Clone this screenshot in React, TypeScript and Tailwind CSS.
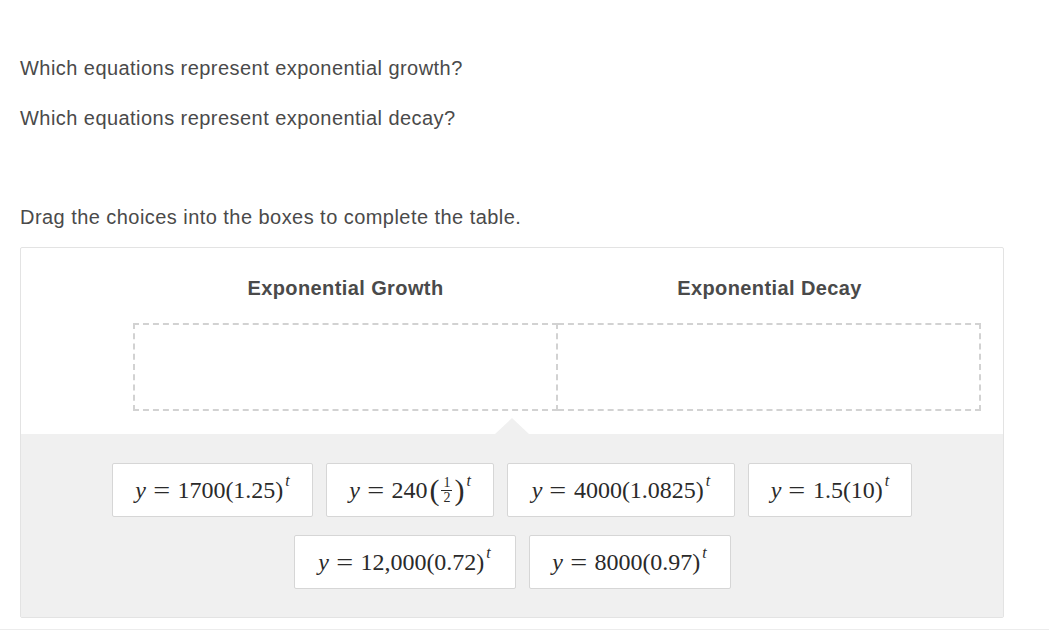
import React from "react";

const mathFont = { fontFamily: '"Liberation Serif", "DejaVu Serif", serif' };

function Eq({ base, frac }: { base: string; frac?: boolean }) {
  return (
    <span className="inline-flex items-baseline whitespace-nowrap text-[24px] text-[#2a2a2a]" style={mathFont}>
      <i className="mr-[9px]">y</i>
      <span className="mr-[9px] scale-x-125 inline-block">=</span>
      {frac ? (
        <span className="inline-flex items-center">
          <span>240</span>
          <span className="text-[30px] leading-none ml-[2px]">(</span>
          <span className="inline-flex flex-col items-center text-[14px] leading-[14px] mx-[2px]">
            <span className="px-[1px]">1</span>
            <span className="border-t border-[#2a2a2a] px-[2px]">2</span>
          </span>
          <span className="text-[30px] leading-none">)</span>
        </span>
      ) : (
        <span>{base}</span>
      )}
      <sup className="text-[16px] italic ml-[2px] -top-[12px]">t</sup>
    </span>
  );
}

const tiles = [
  { w: "w-[201px]", base: "1700(1.25)" },
  { w: "w-[168px]", base: "", frac: true },
  { w: "w-[228px]", base: "4000(1.0825)" },
  { w: "w-[164px]", base: "1.5(10)" },
  { w: "w-[222px]", base: "12,000(0.72)" },
  { w: "w-[202px]", base: "8000(0.97)" },
];

function Tile({ w, base, frac }: { w: string; base: string; frac?: boolean }) {
  return (
    <div className={`${w} h-[54px] flex items-center justify-center bg-white border border-[#d6d6d6] rounded-[2px]`}>
      <Eq base={base} frac={frac} />
    </div>
  );
}

export default function App() {
  return (
    <div
      className="w-[1049px] h-[630px] bg-white text-[#4a4a4a] overflow-hidden border-b border-[#ececec]"
      style={{ fontFamily: '"Liberation Sans", Arial, sans-serif' }}
    >
      <div className="px-[20px] pt-[55px]">
        <p className="text-[20px] tracking-[0.45px] leading-[26px]">Which equations represent exponential growth?</p>
        <p className="text-[20px] tracking-[0.45px] leading-[26px] mt-[24px]">Which equations represent exponential decay?</p>
        <p className="text-[20px] tracking-[0.45px] leading-[26px] mt-[73px]">Drag the choices into the boxes to complete the table.</p>

        <div className="mt-[17px] w-[984px] border border-[#e3e3e3] rounded-[2px]">
          {/* table area */}
          <div className="grid grid-cols-[112px_425px_423px] pt-[27px] h-[186px]">
            <div />
            <div className="text-center font-bold text-[20px] tracking-[0.4px] leading-[26px]">Exponential Growth</div>
            <div className="text-center font-bold text-[20px] tracking-[0.4px] leading-[26px]">Exponential Decay</div>
            <div />
            <div className="-mt-[2px] h-[88px] border-2 border-dashed border-[#d2d2d2]" />
            <div className="-mt-[2px] h-[88px] border-2 border-l-0 border-dashed border-[#d2d2d2]" />
          </div>

          {/* choices */}
          <div className="relative bg-[#f0f0f0] pt-[29px] pb-[28px]">
            <div className="absolute left-[474px] -top-[16px] w-0 h-0 border-l-[17px] border-r-[17px] border-b-[16px] border-l-transparent border-r-transparent border-b-[#f0f0f0]" />
            <div className="flex flex-col items-center gap-[18px]">
              <div className="flex justify-center gap-[13px]">
                {tiles.slice(0, 4).map((t, i) => (
                  <Tile key={i} {...t} />
                ))}
              </div>
              <div className="flex justify-center gap-[13px]">
                {tiles.slice(4).map((t, i) => (
                  <Tile key={i + 4} {...t} />
                ))}
              </div>
            </div>
          </div>
        </div>
      </div>
    </div>
  );
}
